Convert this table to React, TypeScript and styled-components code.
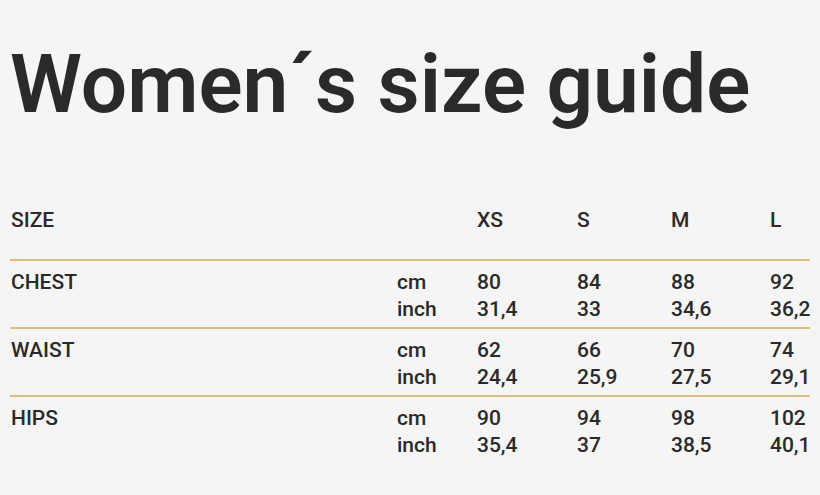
import React from 'react'
import styled, { createGlobalStyle } from 'styled-components'

const GlobalStyle = createGlobalStyle`
  html, body {
    margin: 0;
    padding: 0;
    background: #f5f5f5;
  }
  body {
    font-family: Roboto, 'DejaVu Sans', sans-serif;
    color: #2b2a28;
  }
`

const Page = styled.div`
  width: 820px;
  height: 495px;
  padding: 0 10px;
  box-sizing: border-box;
  overflow: hidden;
`

const Title = styled.h1`
  margin: 0;
  padding-top: 39px;
  font-size: 82px;
  line-height: 90px;
  font-weight: 600;
  white-space: nowrap;
`

const Table = styled.div`
  margin-top: 78px;
  width: 800px;
`

const Row = styled.div<{ $ruled?: boolean }>`
  display: grid;
  grid-template-columns: 386px 80px 100px 94px 99px 1fr;
  align-items: start;
  font-size: 21px;
  line-height: 27px;
  font-weight: 500;
  border-top: ${({ $ruled }) => ($ruled ? '2px solid #dcbf80' : 'none')};
  padding: ${({ $ruled }) => ($ruled ? '8px 0 4px' : '0 0 25px')};
`

const Cell = styled.div`
  display: flex;
  flex-direction: column;
  padding-left: 1px;
`

const sizes = ['XS', 'S', 'M', 'L']

const measures = [
  { name: 'CHEST', cm: ['80', '84', '88', '92'], inch: ['31,4', '33', '34,6', '36,2'] },
  { name: 'WAIST', cm: ['62', '66', '70', '74'], inch: ['24,4', '25,9', '27,5', '29,1'] },
  { name: 'HIPS', cm: ['90', '94', '98', '102'], inch: ['35,4', '37', '38,5', '40,1'] },
]

export default function App() {
  return (
    <Page>
      <GlobalStyle />
      <Title>Women´s size guide</Title>
      <Table>
        <Row>
          <Cell>SIZE</Cell>
          <Cell />
          {sizes.map((s) => (
            <Cell key={s}>{s}</Cell>
          ))}
        </Row>
        {measures.map((m) => (
          <Row key={m.name} $ruled>
            <Cell>{m.name}</Cell>
            <Cell>
              <span>cm</span>
              <span>inch</span>
            </Cell>
            {m.cm.map((v, i) => (
              <Cell key={i}>
                <span>{v}</span>
                <span>{m.inch[i]}</span>
              </Cell>
            ))}
          </Row>
        ))}
      </Table>
    </Page>
  )
}
